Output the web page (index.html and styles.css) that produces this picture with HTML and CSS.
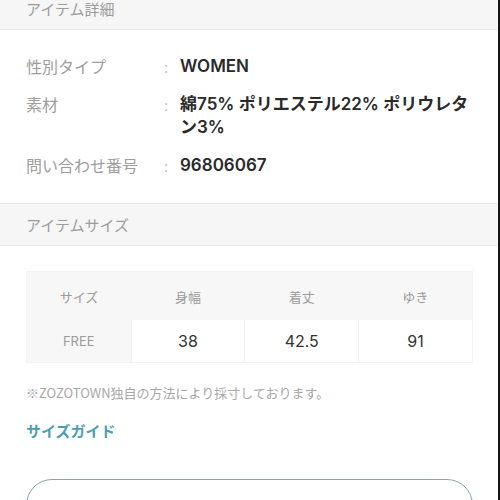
FILE: index.html
```html
<!DOCTYPE html>
<html lang="ja">
<head>
<meta charset="utf-8">
<link rel="stylesheet" href="styles.css">
</head>
<body>
<div class="page">
  <div class="band band-first">アイテム詳細</div>
  <section class="details">
    <div class="row">
      <div class="label">性別タイプ</div>
      <div class="colon">:</div>
      <div class="value">WOMEN</div>
    </div>
    <div class="row">
      <div class="label">素材</div>
      <div class="colon">:</div>
      <div class="value">綿75% ポリエステル22% ポリウレタン3%</div>
    </div>
    <div class="row">
      <div class="label">問い合わせ番号</div>
      <div class="colon">:</div>
      <div class="value">96806067</div>
    </div>
  </section>
  <div class="band">アイテムサイズ</div>
  <section class="sizes">
    <table class="size-table">
      <thead>
        <tr>
          <th class="first">サイズ</th>
          <th>身幅</th>
          <th>着丈</th>
          <th>ゆき</th>
        </tr>
      </thead>
      <tbody>
        <tr>
          <td class="first">FREE</td>
          <td>38</td>
          <td>42.5</td>
          <td>91</td>
        </tr>
      </tbody>
    </table>
    <p class="note">※ZOZOTOWN独自の方法により採寸しております。</p>
    <a class="guide" href="#">サイズガイド</a>
    <div class="button"></div>
  </section>
</div>
</body>
</html>
```
FILE: styles.css
```css
html {
  background: #161616;
}
body {
  margin: 0;
  width: 498px;
  min-height: 500px;
  background: #ffffff;
  font-family: "Noto Sans CJK JP", sans-serif;
  overflow: hidden;
}
.page {
  display: flex;
  flex-direction: column;
}
.band {
  height: 43px;
  box-sizing: border-box;
  background: #f6f6f6;
  border-top: 1px solid #ebebeb;
  border-bottom: 1px solid #ebebeb;
  padding-left: 26px;
  display: flex;
  align-items: center;
  font-size: 15px;
  color: #9b9b9b;
}
.band-first {
  margin-top: -13px;
  border-top: none;
}
.details {
  padding: 25px 25px 26px 26px;
  display: flex;
  flex-direction: column;
  gap: 15px;
}
.row {
  display: grid;
  grid-template-columns: 138px 16px 1fr;
  align-items: start;
}
.label {
  font-size: 16px;
  line-height: 23px;
  color: #9d9d9d;
}
.colon {
  font-size: 15px;
  line-height: 23px;
  color: #c4c4c4;
}
.value {
  font-family: Inter, "Noto Sans CJK JP", sans-serif;
  font-size: 17px;
  line-height: 23px;
  font-weight: 600;
  color: #2a2a2a;
}
.sizes {
  padding: 25px 25px 0 26px;
  display: flex;
  flex-direction: column;
}
.size-table {
  width: 447px;
  border-collapse: collapse;
  table-layout: fixed;
  border: 1px solid #f3f3f3;
}
.size-table th,
.size-table td {
  text-align: center;
  padding: 0;
}
.size-table th {
  height: 48px;
  background: #f7f7f7;
  font-weight: normal;
  font-size: 13px;
  color: #9b9b9b;
}
.size-table th.first {
  width: 104px;
}
.size-table td {
  height: 42px;
  background: #ffffff;
  font-family: Inter, sans-serif;
  font-size: 16px;
  color: #333333;
  border-left: 1px solid #f1f1f1;
}
.size-table td.first {
  background: #f7f7f7;
  font-size: 13px;
  color: #9b9b9b;
  border-left: none;
}
.note {
  margin: 20px 0 0;
  font-size: 13px;
  line-height: 20px;
  color: #a8a8a8;
}
.guide {
  margin-top: 17px;
  font-size: 15px;
  line-height: 22px;
  font-weight: bold;
  color: #4e9db5;
  text-decoration: none;
}
.button {
  margin-top: 37px;
  height: 52px;
  box-sizing: border-box;
  border: 1px solid #7fa9ab;
  border-radius: 26px;
}
```
